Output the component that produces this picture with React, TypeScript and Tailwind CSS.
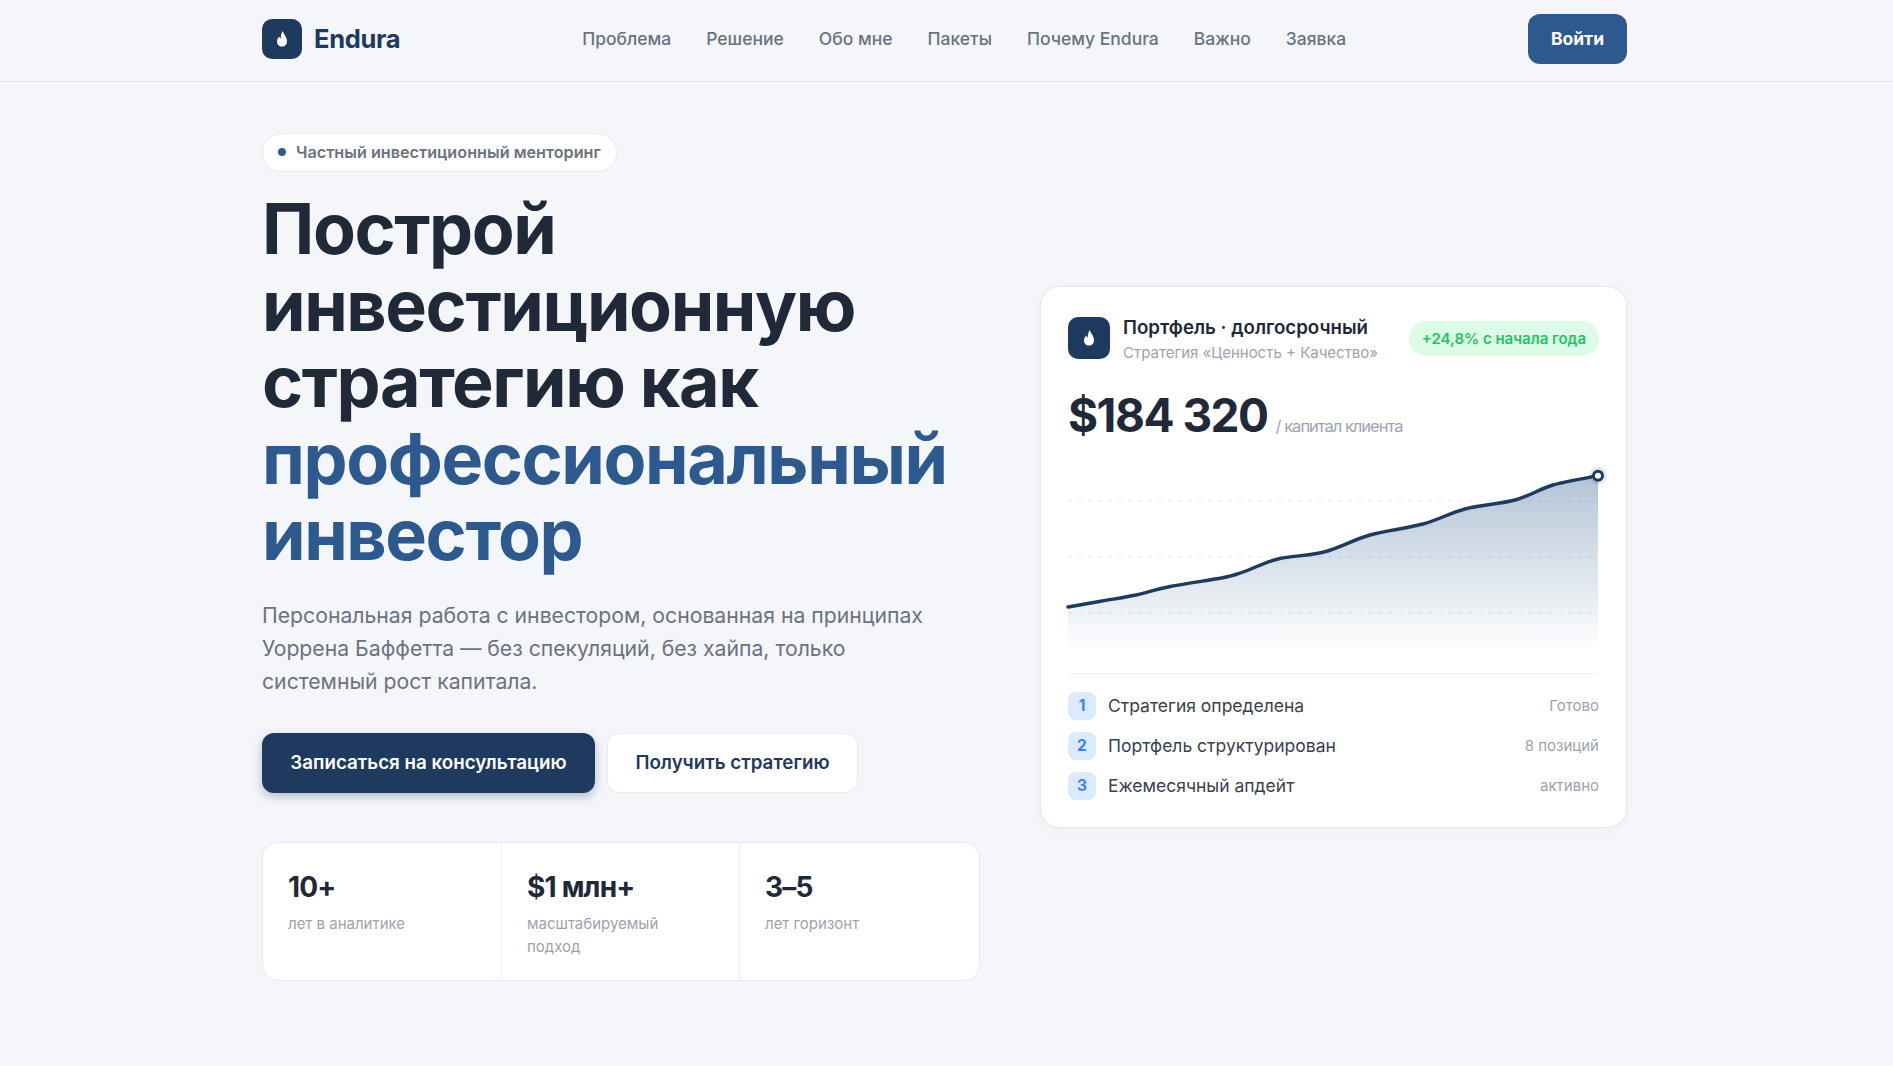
import { Fragment } from "react";

const navLinks = ["Проблема", "Решение", "Обо мне", "Пакеты", "Почему Endura", "Важно", "Заявка"];

const stats = [
  { value: "10+", label: "лет в аналитике" },
  { value: "$1 млн+", label: "масштабируемый подход" },
  { value: "3–5", label: "лет горизонт" },
];

const steps = [
  { title: "Стратегия определена", note: "Готово" },
  { title: "Портфель структурирован", note: "8 позиций" },
  { title: "Ежемесячный апдейт", note: "активно" },
];

const chartPoints: Array<[number, number]> = [
  [0, 148], [34, 142], [68, 136], [102, 127.5], [156, 118.5], [175, 113], [210, 100], [256, 93],
  [302, 76], [355, 65], [397, 50], [447, 41], [485, 26], [530, 16.7],
];

// Smooth line through the points
const linePath = chartPoints.reduce((d, [x, y], i, pts) => {
  if (i === 0) return `M${x} ${y}`;
  const p0 = pts[Math.max(i - 2, 0)];
  const p1 = pts[i - 1];
  const p3 = pts[Math.min(i + 1, pts.length - 1)];
  const c1x = p1[0] + (x - p0[0]) / 6;
  const c1y = p1[1] + (y - p0[1]) / 6;
  const c2x = x - (p3[0] - p1[0]) / 6;
  const c2y = y - (p3[1] - p1[1]) / 6;
  return `${d} C${c1x} ${c1y} ${c2x} ${c2y} ${x} ${y}`;
}, "");

// Logo mark, a small drop on a navy tile
const LogoMark = ({ className }: { className: string }) => (
  <div className={`flex shrink-0 items-center justify-center rounded-[10px] bg-[#1e3a5f] ${className}`}>
    <svg width="16" height="18" viewBox="0 0 16 18" fill="#ffffff">
      <path d="M8.8 1C9.2 3.6 13 6.6 13 11.2C13 14.4 10.8 16.6 8 16.6C5.2 16.6 3 14.4 3 11.4C3 9.2 4.1 7.6 5.4 6.4C5.6 7.6 6.1 8.2 6.8 8.4C6.7 5.6 7.4 3 8.8 1Z" />
    </svg>
  </div>
);

const PortfolioChart = () => (
  <svg width="530" height="200" viewBox="0 0 530 200" fill="none" className="block overflow-visible">
    <defs>
      <linearGradient id="area" x1="0" y1="0" x2="0" y2="1">
        <stop offset="0" stopColor="#2d5a8e" stopOpacity="0.36" />
        <stop offset="1" stopColor="#2d5a8e" stopOpacity="0" />
      </linearGradient>
    </defs>
    {[42, 98, 154].map((y) => (
      <line key={y} x1="0" x2="530" y1={y} y2={y} stroke="#e5e7eb" strokeDasharray="4 6" />
    ))}
    <path d={`${linePath} L530 192 L0 192 Z`} fill="url(#area)" />
    <path d={linePath} stroke="#1e3a5f" strokeWidth="3.4" strokeLinecap="round" />
    <circle cx="530" cy="16.7" r="9" fill="#1e3a5f" fillOpacity="0.12" />
    <circle cx="530" cy="16.7" r="4.5" fill="#ffffff" stroke="#1e3a5f" strokeWidth="3" />
  </svg>
);

const App = () => {
  return (
    <div className="min-h-[1066px] bg-[#f4f6fa] font-['Inter',sans-serif] text-[#1f2937]">
      <header className="h-[82px] border-b border-[#e5e7eb]">
        <div className="ml-[262px] flex h-[78px] w-[1365px] items-center justify-between">
          <div className="flex items-center gap-3">
            <LogoMark className="h-10 w-10" />
            <span className="text-[25.5px] font-bold tracking-[-0.3px] text-[#1e3a5f]">Endura</span>
          </div>
          <nav className="flex items-center gap-[35px]">
            {navLinks.map((link) => (
              <a key={link} className="text-[17.5px] font-medium text-[#6b7280]">
                {link}
              </a>
            ))}
          </nav>
          <button className="h-[50px] w-[99px] rounded-xl bg-[#2d5a8e] text-[17.5px] font-bold text-white">
            Войти
          </button>
        </div>
      </header>

      <main className="ml-[262px] grid w-[1365px] grid-cols-[718px_587px] items-center justify-between pt-[51px]">
        <div>
          <div className="inline-flex h-[39px] items-center gap-[10px] rounded-full border border-[#e8eaef] bg-white px-[15px] pb-[1px] text-[16.2px] font-semibold text-[#6b7280]">
            <span className="h-2 w-2 rounded-full bg-[#2d5a8e]" />
            Частный инвестиционный менторинг
          </div>

          <h1 className="mt-[19px] text-[70px] font-bold leading-[76.6px] tracking-[-1.4px] text-[#1f2937]">
            Построй инвестиционную стратегию как{" "}
            <span className="text-[#2d5a8e]">профессиональный инвестор</span>
          </h1>

          <p className="mt-[25px] w-[680px] text-[21.2px] leading-[33px] text-[#6b7280]">
            Персональная работа с инвестором, основанная на принципах Уоррена Баффетта — без спекуляций, без хайпа, только системный рост капитала.
          </p>

          <div className="mt-[35px] flex gap-3">
            <button className="h-[60px] w-[333px] rounded-xl bg-[#1e3a5f] text-[18.8px] font-semibold text-white shadow-[0_4px_10px_rgba(30,58,95,0.3)]">
              Записаться на консультацию
            </button>
            <button className="h-[60px] w-[251px] rounded-xl border border-[#e8eaef] bg-white text-[18.8px] font-semibold text-[#1e3a5f]">
              Получить стратегию
            </button>
          </div>

          <div className="mt-[49px] grid h-[139px] grid-cols-[238px_238px_1fr] rounded-2xl border border-[#e8eaef] bg-white">
            {stats.map((stat, i) => (
              <div key={stat.value} className={`px-[25px] pt-[26px] ${i > 0 ? "border-l border-[#eef0f4]" : ""}`}>
                <div className="text-[28px] font-bold leading-[36px] tracking-[-0.8px] text-[#1f2937]">{stat.value}</div>
                <div className="mt-[7px] text-[15px] leading-[23px] text-[#9ca3af]">{stat.label}</div>
              </div>
            ))}
          </div>
        </div>

        <div className="rounded-[20px] border border-[#e8eaef] bg-white px-[27px] pb-[27px] pt-[30px] shadow-[0_2px_8px_rgba(30,41,59,0.04)]">
          <div className="flex h-[42px] items-center justify-between">
            <div className="flex items-center gap-[13px]">
              <LogoMark className="h-[42px] w-[42px]" />
              <div className="pt-[5px]">
                <div className="text-[18.7px] font-semibold leading-[24px] text-[#1f2937]">Портфель · долгосрочный</div>
                <div className="mt-[2px] text-[15px] leading-[22px] text-[#9ca3af]">Стратегия «Ценность + Качество»</div>
              </div>
            </div>
            <span className="mt-[2px] flex h-[35px] items-center rounded-full bg-[#dcfce7] px-[13px] text-[15px] font-semibold text-[#22c55e]">
              +24,8% с начала года
            </span>
          </div>

          <div className="mt-[27px] flex items-baseline gap-2">
            <span className="text-[46px] font-bold leading-[58px] tracking-[-1.5px] text-[#1f2937]">$184 320</span>
            <span className="text-[16.5px] tracking-[-1px] text-[#9ca3af]">/ капитал клиента</span>
          </div>

          <div className="mt-[15px]">
            <PortfolioChart />
          </div>

          <div className="mt-[14px] grid grid-cols-[1fr_auto] items-center gap-y-3 border-t border-[#f0f1f4] pt-[18px]">
            {steps.map((step, i) => (
              <Fragment key={step.title}>
                <div className="flex items-center gap-3">
                  <span className="flex h-7 w-7 items-center justify-center rounded-lg bg-[#dbeafe] text-[15.5px] font-bold text-[#3b82f6]">
                    {i + 1}
                  </span>
                  <span className="text-[17.5px] text-[#374151]">{step.title}</span>
                </div>
                <span className="justify-self-end text-[15px] text-[#9ca3af]">{step.note}</span>
              </Fragment>
            ))}
          </div>
        </div>
      </main>
    </div>
  );
};

export default App;
